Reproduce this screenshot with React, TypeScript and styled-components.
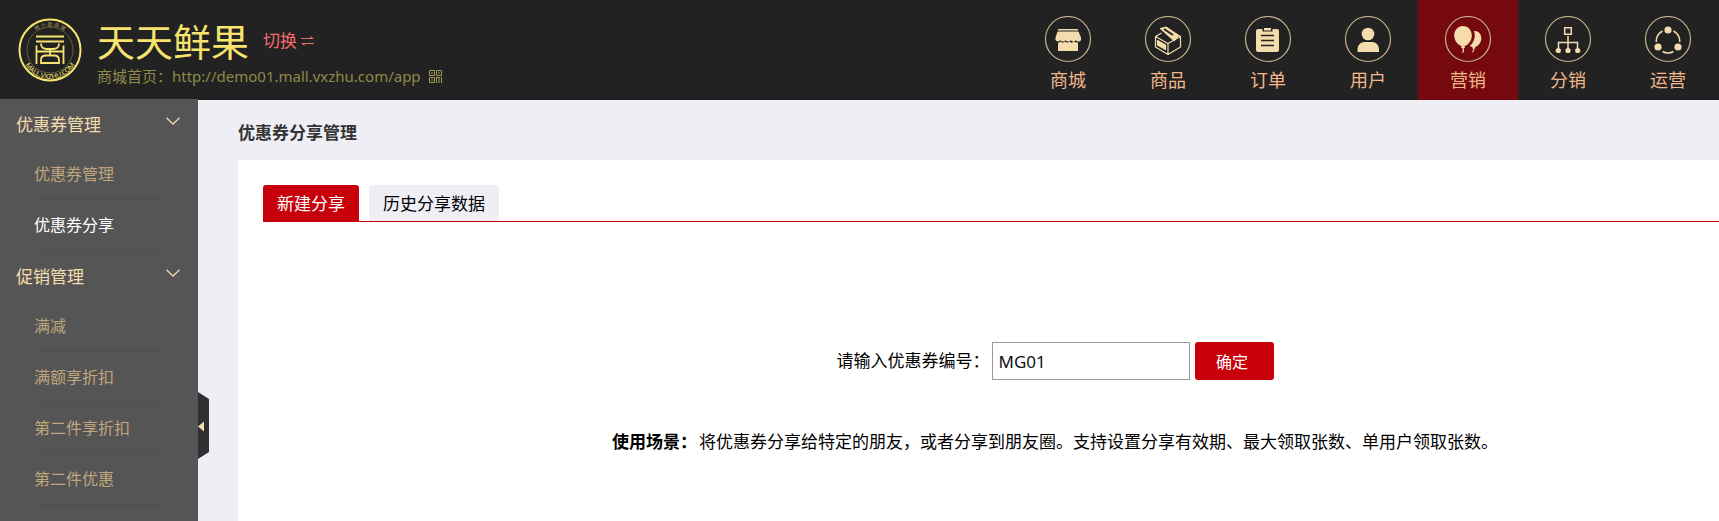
import React, { useState } from "react";
import styled, { createGlobalStyle } from "styled-components";

const GlobalStyle = createGlobalStyle`
  * { box-sizing: border-box; }
  body {
    margin: 0;
    background: #efeef5;
    color: #000;
    font-family: "Noto Sans", "Noto Sans CJK SC", sans-serif;
    font-size: 17px;
    line-height: 24px;
  }
  button, input { font-family: inherit; }
  a { text-decoration: none; }
`;

const Page = styled.div`
  display: flex;
  flex-direction: column;
  min-height: 100vh;
  overflow: hidden;
`;

const Header = styled.header`
  display: flex;
  justify-content: space-between;
  height: 100px;
  flex: none;
  background: #222;
`;

const Brand = styled.div`
  display: flex;
  gap: 15px;
  padding: 18px 0 0 18px;
`;

const BrandText = styled.div`
  display: flex;
  flex-direction: column;
`;

const TitleRow = styled.div`
  display: flex;
  align-items: center;
  gap: 14px;
  height: 46px;
`;

const ShopName = styled.h1`
  margin: 0;
  color: #f7e36f;
  font-size: 38px;
  font-weight: 400;
  line-height: 46px;
`;

const SwitchLink = styled.a`
  display: flex;
  align-items: center;
  gap: 4px;
  color: #f26b6b;
`;

const ShopUrl = styled.div`
  display: flex;
  align-items: center;
  gap: 8px;
  color: #8f8a47;
  font-size: 15px;
  line-height: 24px;
`;

const UrlLink = styled.a`
  color: inherit;
`;

const TopNav = styled.nav`
  display: flex;
  padding-right: 1px;
`;

const TopLink = styled.a<{ $active?: boolean }>`
  display: flex;
  flex-direction: column;
  align-items: center;
  gap: 4px;
  width: 100px;
  padding-top: 16px;
  color: #f2b88c;
  font-size: 18px;
  line-height: 24px;
  background: ${(p) => (p.$active ? "#75090e" : "transparent")};
`;

const Body = styled.div`
  display: flex;
  flex: 1;
`;

const Sidebar = styled.aside`
  position: relative;
  flex: none;
  width: 198px;
  margin-top: -1px;
  background: #555;
`;

const GroupButton = styled.button`
  display: flex;
  justify-content: space-between;
  align-items: center;
  width: 100%;
  height: 50px;
  padding: 2px 18px 0 16px;
  border: 0;
  background: none;
  color: #f5dcac;
  font-size: 17px;
  line-height: 24px;
`;

const Chevron = styled.svg`
  display: block;
  margin-bottom: 8px;
`;

const SubList = styled.ul`
  margin: 0;
  padding: 0 36px 0 34px;
  list-style: none;
`;

const SubItem = styled.li`
  border-bottom: 1px solid #4f4f4f;
`;

const SubLink = styled.a<{ $active?: boolean }>`
  display: block;
  color: ${(p) => (p.$active ? "#fff" : "#c0a67c")};
  font-size: 16px;
  line-height: 50px;
`;

const CollapseButton = styled.button`
  position: absolute;
  left: 100%;
  top: 293px;
  width: 12px;
  height: 67px;
  padding: 0;
  border: 0;
  background: none;
`;

const Main = styled.main`
  display: flex;
  flex-direction: column;
  flex: 1;
  min-width: 0;
  padding-left: 40px;
`;

const PageTitle = styled.h2`
  margin: 0;
  padding: 21px 0 15px;
  color: #333;
  font-size: 17px;
  line-height: 24px;
`;

const Panel = styled.section`
  flex: 1;
  padding: 25px 0 0 25px;
  background: #fff;
`;

const Tabs = styled.div`
  display: flex;
  gap: 10px;
  border-bottom: 1px solid #c7000b;
`;

const Tab = styled.button<{ $active?: boolean }>`
  height: 36px;
  padding: 2px 14px 0;
  border: 0;
  border-radius: 3px 3px 0 0;
  background: ${(p) => (p.$active ? "#c7000b" : "#efeef5")};
  color: ${(p) => (p.$active ? "#fff" : "#000")};
  font-size: 17px;
  line-height: 24px;
`;

const ShareForm = styled.form`
  display: flex;
  flex-direction: column;
  align-items: center;
  gap: 50px;
  padding: 120px 0 48px 128px;
`;

const FieldRow = styled.div`
  display: flex;
  align-items: center;
`;

const FieldLabel = styled.label`
  margin-right: 2px;
`;

const CodeInput = styled.input`
  width: 198px;
  height: 38px;
  margin-right: 5px;
  padding: 0 6px;
  border: 1px solid #9a9a9a;
  background: #fff;
  color: #111;
  font-size: 17px;
`;

const SubmitButton = styled.button`
  width: 79px;
  height: 38px;
  padding: 0 4px 0 0;
  border: 0;
  border-radius: 3px;
  background: #c7000b;
  color: #fff;
  font-size: 16px;
`;

const Note = styled.p`
  display: flex;
  margin: 0;
  white-space: nowrap;
`;

const NoteTitle = styled.strong`
  margin-right: 2px;
`;

const LogoMark = () => (
  <svg width="64" height="64" viewBox="0 0 64 64" fill="none" stroke="#f7e36f" aria-hidden="true">
    <circle cx="32" cy="32" r="30.5" strokeWidth="2" />
    <circle cx="32" cy="32" r="23" strokeWidth="1" opacity=".3" />
    <path d="M18 18.500h28M18 23.500h28" strokeWidth="2" />
    <path d="M18.500 46V27.500M45.500 46V27.500M18.500 33.500h27" strokeWidth="1.800" />
    <path d="M23 25.500c0 4 3 5.500 6 5.500h6c3 0 6-1.500 6-5.500M32 31v6" strokeWidth="1.800" />
    <path d="M23 45v-3c0-3 2-4.500 5-4.500h8c3 0 5 1.500 5 4.500v3z" strokeWidth="1.800" />
    <path id="logo-top" d="M8 32a24 24 0 0 1 48 0" stroke="none" />
    <path id="logo-bottom" d="M3 32a29 29 0 0 0 58 0" stroke="none" />
    <text fill="#a99c55" stroke="none" fontSize="5" textAnchor="middle">
      <textPath href="#logo-top" startOffset="50%">微 小 助 商 城</textPath>
    </text>
    <text fill="#f7e36f" stroke="none" fontSize="7" textAnchor="middle">
      <textPath href="#logo-bottom" startOffset="50%">MALL.VXZHU.COM</textPath>
    </text>
  </svg>
);

const SwapIcon = () => (
  <svg width="13" height="10" viewBox="0 0 13 10" fill="#f26b6b" aria-hidden="true">
    <path d="M0 3h13L9.500 0v2H0zM13 7H0l3.500 3V8H13z" />
  </svg>
);

const QrIcon = () => (
  <svg width="13" height="13" viewBox="0 0 13 13" fill="none" stroke="#a49b52" aria-hidden="true">
    <path d="M.5.5h5v5h-5zM7.500.5h5v5h-5zM.5 7.500h5v5h-5z" />
    <path d="M2 3h2M9 3h2M2 10h2M7.500 7v6M10 7v6M12.500 7v6M7.500 7.500h3" />
  </svg>
);

const CREAM = "#f5dcac";

const glyphs: Record<string, React.ReactNode> = {
  mall: (
    <g fill={CREAM}>
      <path d="M14 13h20v1.500H14z" />
      <path d="M13.500 15.500h21l2.500 6v2.500c-1 2-4 2-5 0-1 2-4 2-5 0-1 2-4.500 2-5.500 0-1 2-4 2-5 0-1 2-4.500 1.500-5 0v-2.500z" />
      <path d="M14 26.500c1.500 0 2-.5 2.500-1 1.500 1.500 3 1.500 4.500 0 1.500 1.500 3 1.500 4.500 0 1.500 1.500 3 1.500 4.500 0 1 1 2.500 1 4 1V35H14z" />
    </g>
  ),
  goods: (
    <g stroke={CREAM} fill="none" strokeWidth="1.200" strokeLinejoin="round">
      <path d="M11.500 20.500L24 27.500v11L11.500 31zM24 27.500l12.500-7V31L24 38.500M11.500 20.500l6-3.500M31 17.500l5.500 3" />
      <path d="M16.500 12.500l5.500-1.500 12.500 8.500-4.500 5z" fill={CREAM} />
      <path d="M20 13l9 6" stroke="#222" strokeWidth="2" />
      <path d="M13.500 24.500l8 4.500v4.500l-8-4.500z" fill={CREAM} />
    </g>
  ),
  order: (
    <g>
      <rect x="12" y="13" width="23" height="23" rx="2" fill={CREAM} />
      <path d="M18.500 12h10v3.500h-10z" fill="#222" />
      <path d="M20 12h7v2.500h-7z" fill={CREAM} />
      <path d="M17 19.500h13M17 24.500h13M17 29.500h13" stroke="#222" strokeWidth="1.500" />
    </g>
  ),
  user: (
    <g fill={CREAM}>
      <circle cx="24" cy="18" r="6.300" />
      <path d="M13.500 36v-2c0-5 3-8 7-8H28c4 0 7 3 7 8v2z" />
    </g>
  ),
  marketing: (
    <g fill={CREAM}>
      <path d="M19 10c-5 0-8.800 4-8.800 9.500 0 5 3.500 9.500 7.500 10.700l-.8 1.800h1.400c0 1.500 1 2 .3 3.500l-1 1.300 1.800-.2c1.400-2 .4-2.500.2-4.600H21l-.5-1.800c4-1.200 7.300-5.700 7.300-10.700C27.800 14 24 10 19 10z" />
      <path d="M30 15c4-.5 7.500 2.500 7.300 7.500-.2 4.500-3 7.500-6.300 8.500l.5 1.500h-1.200c0 2-.3 2.500-1.500 4h-1c.8-1.500 1.400-2 1.500-4h-1l.2-1.500c-1.200-.2-2-.5-2.700-1 4-3.500 6.200-9 4.200-15z" />
    </g>
  ),
  distribution: (
    <g stroke={CREAM} fill="none">
      <path d="M20.700 11.700h6.600v6.600h-6.600z" strokeWidth="1.500" />
      <path d="M24 20v13M14.500 32v-5.500h19V32" strokeWidth="1.500" />
      <g fill={CREAM} stroke="none">
        <circle cx="14.300" cy="34.500" r="2.600" />
        <circle cx="24" cy="34.500" r="2.600" />
        <circle cx="33.700" cy="34.500" r="2.600" />
      </g>
    </g>
  ),
  operation: (
    <g stroke={CREAM} fill="none" strokeWidth="1.500">
      <path d="M18.500 15A12 12 0 0 0 12.200 26M29.500 15A12 12 0 0 1 35.800 26M18.500 35.500a12 12 0 0 0 11 0" />
      <g fill={CREAM} stroke="none">
        <circle cx="24" cy="14" r="3.600" />
        <circle cx="14" cy="31" r="3.600" />
        <circle cx="34" cy="31" r="3.600" />
      </g>
    </g>
  ),
};

const NavIcon = ({ name }: { name: string }) => (
  <svg width="48" height="48" viewBox="0 0 48 48" aria-hidden="true">
    <circle cx="24" cy="23" r="22.500" fill="none" stroke="#c4b08a" strokeWidth="1.200" />
    {glyphs[name]}
  </svg>
);

const topItems = [
  ["mall", "商城"],
  ["goods", "商品"],
  ["order", "订单"],
  ["user", "用户"],
  ["marketing", "营销"],
  ["distribution", "分销"],
  ["operation", "运营"],
];

const groups = [
  { title: "优惠券管理", items: ["优惠券管理", "优惠券分享"] },
  { title: "促销管理", items: ["满减", "满额享折扣", "第二件享折扣", "第二件优惠"] },
];

const tabs = ["新建分享", "历史分享数据"];

export default function App() {
  const [tab, setTab] = useState(0);
  return (
    <Page>
      <GlobalStyle />
      <Header>
        <Brand>
          <LogoMark />
          <BrandText>
            <TitleRow>
              <ShopName>天天鲜果</ShopName>
              <SwitchLink href="#switch">
                切换
                <SwapIcon />
              </SwitchLink>
            </TitleRow>
            <ShopUrl>
              <span>
                商城首页：
                <UrlLink href="#home">http://demo01.mall.vxzhu.com/app</UrlLink>
              </span>
              <QrIcon />
            </ShopUrl>
          </BrandText>
        </Brand>
        <TopNav>
          {topItems.map(([icon, label]) => (
            <TopLink key={icon} href={`#${icon}`} $active={icon === "marketing"}>
              <NavIcon name={icon} />
              <span>{label}</span>
            </TopLink>
          ))}
        </TopNav>
      </Header>
      <Body>
        <Sidebar>
          {groups.map((group) => (
            <nav key={group.title}>
              <GroupButton type="button">
                {group.title}
                <Chevron width="14" height="8" viewBox="0 0 14 8" fill="none" stroke={CREAM} strokeWidth="1.300">
                  <path d="M.5.8L7 7 13.500.8" />
                </Chevron>
              </GroupButton>
              <SubList>
                {group.items.map((item) => (
                  <SubItem key={item}>
                    <SubLink href="#" $active={item === "优惠券分享"}>
                      {item}
                    </SubLink>
                  </SubItem>
                ))}
              </SubList>
            </nav>
          ))}
          <CollapseButton type="button" aria-label="收起菜单">
            <svg width="12" height="67" viewBox="0 0 12 67">
              <path d="M0 0l11 7v53L0 67z" fill="#322f34" />
              <path d="M0 34.500l6-5v10z" fill={CREAM} />
            </svg>
          </CollapseButton>
        </Sidebar>
        <Main>
          <PageTitle>优惠券分享管理</PageTitle>
          <Panel>
            <Tabs role="tablist">
              {tabs.map((label, i) => (
                <Tab key={label} type="button" role="tab" aria-selected={tab === i} $active={tab === i} onClick={() => setTab(i)}>
                  {label}
                </Tab>
              ))}
            </Tabs>
            <ShareForm onSubmit={(e) => e.preventDefault()}>
              <FieldRow>
                <FieldLabel htmlFor="coupon-code">请输入优惠券编号：</FieldLabel>
                <CodeInput id="coupon-code" defaultValue="MG01" />
                <SubmitButton type="submit">确定</SubmitButton>
              </FieldRow>
              <Note>
                <NoteTitle>使用场景：</NoteTitle>
                将优惠券分享给特定的朋友，或者分享到朋友圈。支持设置分享有效期、最大领取张数、单用户领取张数。
              </Note>
            </ShareForm>
          </Panel>
        </Main>
      </Body>
    </Page>
  );
}
